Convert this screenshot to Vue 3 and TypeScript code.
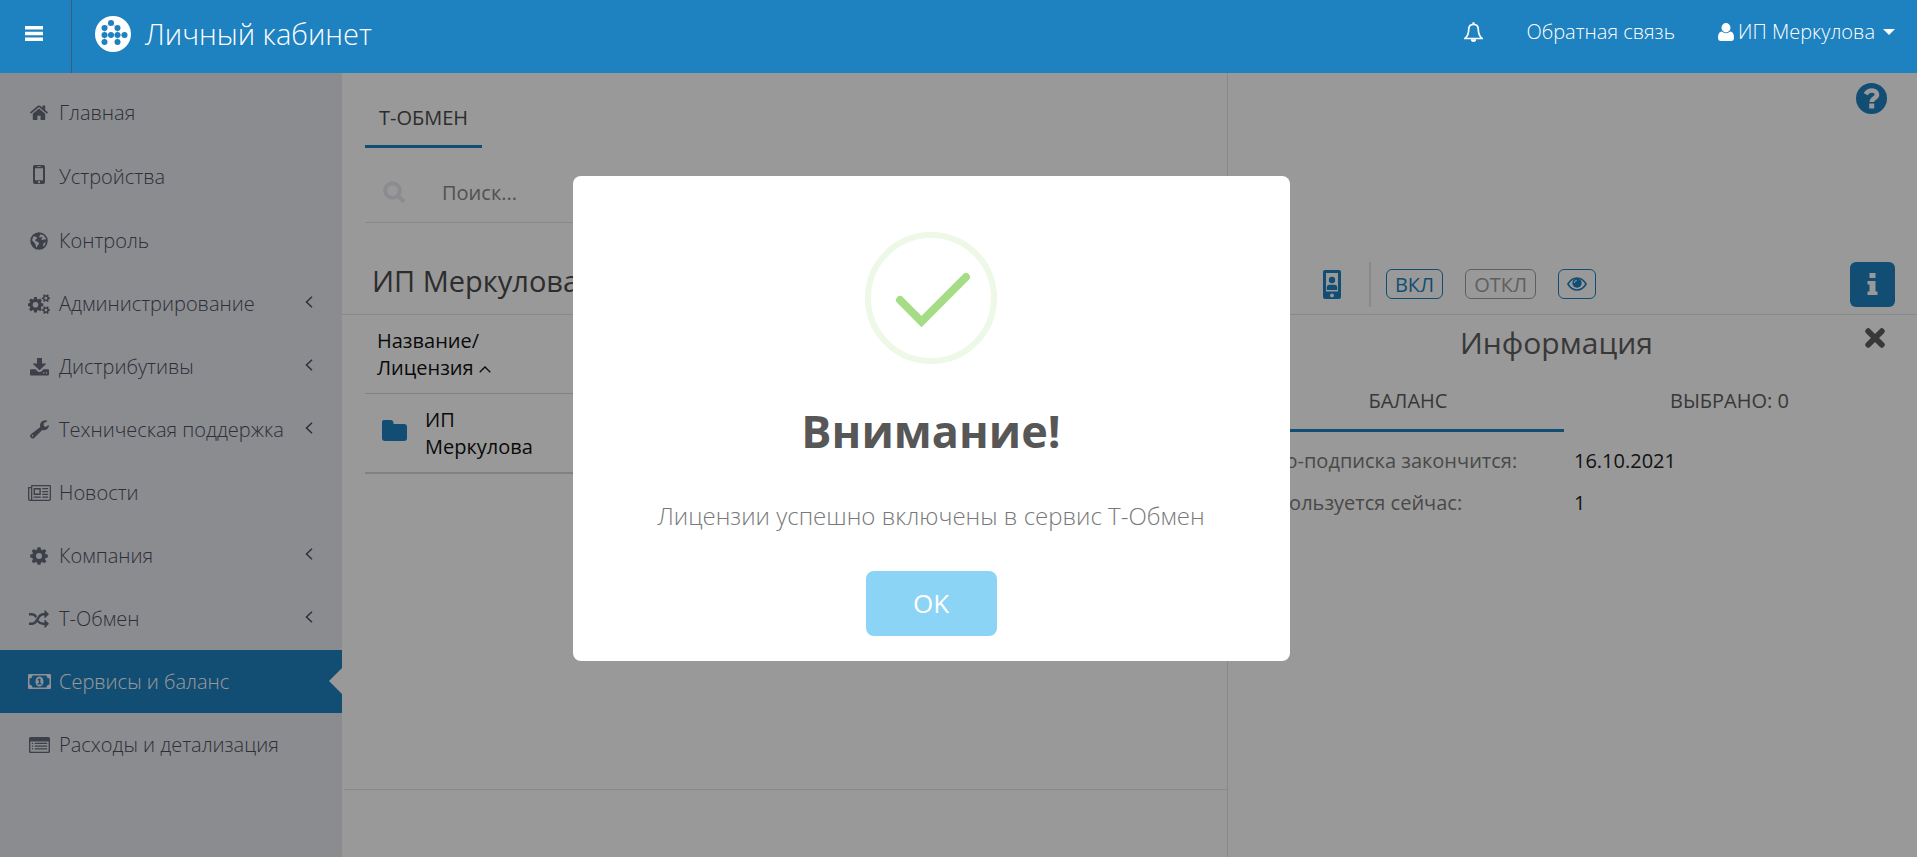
<script setup lang="ts">
import { ref } from 'vue'

interface Icon {
  box: string
  w: number
  h: number
  d: string
}

interface MenuItem {
  label: string
  icon: string
  arrow?: boolean
  active?: boolean
}

const icons: Record<string, Icon> = {
  home: {
    box: '0 0 18 15', w: 18, h: 15,
    d: 'M9 3.6 2.8 8.8V14.2q0 .7.7.7H7.4V10.8h3.2v4.1h3.9q.7 0 .7-.7V8.8ZM17.8 7.2 15.2 5V.8q0-.4-.4-.4h-1.9q-.4 0-.4.4v2L10.2.8Q9 0 7.8.8L.2 7.2q-.3.3 0 .5l.6.7q.2.2.5 0L9 2.1l7.7 6.3q.3.2.5 0l.6-.7q.3-.2 0-.5Z',
  },
  mobile: {
    box: '0 0 12 19', w: 12, h: 19,
    d: 'M1.8 0h8.4Q12 0 12 1.8v15.4q0 1.8-1.8 1.8H1.8Q0 19 0 17.2V1.8Q0 0 1.8 0ZM2 3.2v12h8v-12ZM4.2 1.2v.8h3.6v-.8ZM6 16.1a1.1 1.1 0 1 0 0 2.2 1.1 1.1 0 1 0 0-2.2Z',
  },
  globe: {
    box: '0 0 18 18', w: 18, h: 18,
    d: 'M9 .3a8.7 8.7 0 1 0 0 17.4A8.7 8.7 0 1 0 9 .3ZM10.5 2.2l3 1 2.6 3.4-.6 1.2-1.3-.6-1.4.8-1.5-.2.5-1.6 1-.8-1.3-.5-1.8.8-.6-1.1.9-1ZM3.2 4.8 5 4.3l1.7 1 .2 1.5-1.7 1 .3 1.3 1.6.5 2 1.4-.6 1.8-1.3 1.2-.2 1.6-1-.6-.7-3.3L3.6 10 2.1 8.2ZM14.8 10.2l1 .4-1.3 3-1.6 1 .2-2.4Z',
  },
  cogs: {
    box: '0 0 22 20', w: 22, h: 20,
    d: 'M6.2 3.1h2.6l.4 2 1.2.5 1.7-1.2 1.8 1.8-1.1 1.7.5 1.2 2 .4v2.6l-2 .4-.5 1.2 1.1 1.7-1.8 1.8-1.7-1.1-1.2.5-.4 2H6.2l-.4-2-1.2-.5-1.7 1.1-1.8-1.8 1.1-1.7-.5-1.2-1.7-.4V9.5l1.7-.4.5-1.2-1.1-1.7 1.8-1.8 1.7 1.2 1.2-.5ZM7.5 8a2.8 2.8 0 1 0 0 5.6 2.8 2.8 0 1 0 0-5.6ZM16.4.3l1 .9h1l1.1-.9 1.2.8-.4 1.3.5.8 1.3.3v1.4l-1.3.3-.5.8.4 1.4-1.2.7-1.1-1h-1l-1 1-1.2-.7.4-1.4-.5-.8-1.2-.3V3.5l1.2-.3.5-.8-.4-1.3ZM17.9 2.8a1.4 1.4 0 1 0 0 2.8 1.4 1.4 0 1 0 0-2.8ZM16.4 12.2l1 1h1l1.1-1 1.2.8-.4 1.3.5.8 1.3.3v1.4l-1.3.3-.5.8.4 1.4-1.2.7-1.1-1h-1l-1 1-1.2-.7.4-1.4-.5-.8-1.2-.3v-1.4l1.2-.3.5-.8-.4-1.3ZM17.9 14.7a1.4 1.4 0 1 0 0 2.8 1.4 1.4 0 1 0 0-2.8Z',
  },
  download: {
    box: '0 0 19 18', w: 19, h: 18,
    d: 'M7 0h5v5.5h3.6q.8 0 .2.7l-5.7 5.6q-.6.6-1.2 0L3.2 6.2q-.6-.7.2-.7H7ZM1 11.2h4.5l2 2q2 1.8 4 0l2-2H18q1 0 1 1v4.2q0 1-1 1H1q-1 0-1-1v-4.2q0-1 1-1ZM13 14.2v1.3h1.3v-1.3ZM15.8 14.2v1.3h1.3v-1.3Z',
  },
  wrench: {
    box: '0 0 19 19', w: 19, h: 19,
    d: 'M10.3 7.1A5.2 5.2 0 0 1 16.8.5q.9.2.3.7L13.7 3.2V5.8L15.5 6.9 18.3 5.2q.8-.3.7.6A5.3 5.3 0 0 1 12.2 9.9L4.2 18q-1.4 1.2-2.8 0L.6 17.2q-1.1-1.4 0-2.7ZM2.6 14.9a.8.8 0 1 0 0 1.6.8.8 0 1 0 0-1.6Z',
  },
  news: {
    box: '0 0 23 16', w: 23, h: 16,
    d: 'M4 0h18q1 0 1 1v13q0 2-2 2H2q-2 0-2-2V2h3V1q0-1 1-1ZM4.3 1.3V14q0 .4-.2.7H21q.7 0 .7-.7V1.3ZM1.3 3.3V14q0 .7.8.7T3 14V3.3ZM5.6 3h7.2v7H5.6ZM7 4.4v4.2h4.4V4.4ZM14.3 3h5.9v1.3h-5.9ZM14.3 5.9h5.9v1.3h-5.9ZM14.3 8.7h5.9V10h-5.9ZM5.6 11.5h7.2v1.3H5.6ZM14.3 11.5h5.9v1.3h-5.9Z',
  },
  cog: {
    box: '0 0 18 18', w: 18, h: 18,
    d: 'M7.5.3h3l.5 2.3 1.3.6 2-1.3 2 2-1.3 2 .6 1.3 2.2.4v2.9l-2.2.5-.6 1.3 1.3 2-2 2-2-1.3-1.3.6-.5 2.2h-3L7 15.6 5.7 15l-2 1.3-2-2 1.3-2-.6-1.3-2.2-.5V7.6l2.2-.4L3 5.9l-1.3-2 2-2 2 1.3L7 2.6ZM9 6a3 3 0 1 0 0 6 3 3 0 1 0 0-6Z',
  },
  shuffle: {
    box: '0 0 20 18', w: 20, h: 18,
    d: 'M0 3h3.2Q6 3 8 6L6.8 8.2Q5 5.6 3.2 5.6H0ZM0 12.4h3.2c4.4 0 4.8-9.4 10.8-9.4h1.5V.5q.1-.7.7-.2L20 4.2 16.2 8.1q-.6.5-.7-.2V5.6H14c-4.3 0-4.6 9.4-10.8 9.4H0ZM9.4 9.9q2 2.5 4.6 2.5h1.5v-2.3q.1-.7.7-.2l3.8 3.9-3.8 3.9q-.6.5-.7-.2V15H14q-3.5 0-5.9-2.9Z',
  },
  money: {
    box: '0 0 23 15', w: 23, h: 15,
    d: 'M1 0h21q1 0 1 1v13q0 1-1 1H1q-1 0-1-1V1Q0 0 1 0ZM4.6 1.5Q4.3 4.3 1.5 4.6V10.4Q4.3 10.7 4.6 13.5H18.4Q18.7 10.7 21.5 10.4V4.6Q18.7 4.3 18.4 1.5ZM11.5 2.5c5.3 0 5.3 10 0 10s-5.3-10 0-10ZM11 4.5 9.4 5.8l.7.9.8-.5V9.2H9.6v1.2h4V9.2h-1.2V4.5Z',
  },
  list: {
    box: '0 0 21 16', w: 21, h: 16,
    d: 'M1.5 0h18Q21 0 21 1.5v13q0 1.5-1.5 1.5h-18Q0 16 0 14.5v-13Q0 0 1.5 0ZM1.4 4.4v9.7q0 .6.6.6h17q.6 0 .6-.6V4.4ZM2.9 5.7h1.3V7H2.9ZM5.7 5.7h12.5V7H5.7ZM2.9 8.5h1.3v1.3H2.9ZM5.7 8.5h12.5v1.3H5.7ZM2.9 11.3h1.3v1.3H2.9ZM5.7 11.3h12.5v1.3H5.7Z',
  },
}

const menu: MenuItem[] = [
  { label: 'Главная', icon: 'home' },
  { label: 'Устройства', icon: 'mobile' },
  { label: 'Контроль', icon: 'globe' },
  { label: 'Администрирование', icon: 'cogs', arrow: true },
  { label: 'Дистрибутивы', icon: 'download', arrow: true },
  { label: 'Техническая поддержка', icon: 'wrench', arrow: true },
  { label: 'Новости', icon: 'news' },
  { label: 'Компания', icon: 'cog', arrow: true },
  { label: 'Т-Обмен', icon: 'shuffle', arrow: true },
  { label: 'Сервисы и баланс', icon: 'money', active: true },
  { label: 'Расходы и детализация', icon: 'list' },
]

const logoDots: [number, number][] = [
  [16, 7], [9.5, 12], [22.5, 12], [9.5, 19], [16, 19], [22.5, 19], [29.5, 19], [9.5, 26], [22.5, 26],
]

const search = ref('')
const open = ref(true)
</script>

<template>
  <div class="page">
    <header class="topbar">
      <button class="burger" type="button" aria-label="Меню">
        <svg width="18" height="15" viewBox="0 0 18 15"><path fill="currentColor" d="M0 0h18v3.400H0ZM0 5.800h18v3.400H0ZM0 11.600h18V15H0Z" /></svg>
      </button>
      <a class="brand" href="#">
        <svg width="36" height="36" viewBox="0 0 36 36">
          <circle cx="18" cy="18" r="18" fill="#fff" />
          <circle v-for="(p, i) in logoDots" :key="i" :cx="p[0]" :cy="p[1]" r="3" fill="#1e81c0" />
          <path d="M9.500 19h20M16 7l-6.500 5M16 7l6.500 5M9.500 12v14M22.500 12v14" fill="none" stroke="#1e81c0" stroke-width="1" opacity=".4" />
        </svg>
        <span>Личный кабинет</span>
      </a>
      <nav class="topnav">
        <a class="bell" href="#" aria-label="Уведомления">
          <svg width="19" height="20" viewBox="0 0 19 20">
            <path fill="none" stroke="currentColor" stroke-width="1.700" d="M9.500 2.300C6 2.300 4.700 5 4.700 7.500c0 5-1.500 7-3.700 9h17c-2.200-2-3.700-4-3.700-9 0-2.500-1.300-5.200-4.800-5.200Z" />
            <path fill="currentColor" d="M6.800 17.200h5.400a2.700 2.700 0 0 1-5.400 0ZM8.500.3h2v2.200h-2Z" />
          </svg>
        </a>
        <a class="feedback" href="#">Обратная связь</a>
        <button class="user" type="button">
          <svg width="16" height="18" viewBox="0 0 16 18"><path fill="currentColor" d="M8 0a4.500 4.700 0 1 1 0 9.400A4.500 4.700 0 1 1 8 0ZM3.800 8.500Q8 12 12.200 8.500 16 9 16 14.500q0 3.500-3 3.500H3q-3 0-3-3.500Q0 9 3.800 8.500Z" /></svg>
          <span>ИП Меркулова</span>
          <svg class="caret" width="12" height="6" viewBox="0 0 12 6"><path fill="currentColor" d="M0 0h12L6 6Z" /></svg>
        </button>
      </nav>
    </header>

    <div class="body">
      <aside class="sidebar">
        <ul class="menu">
          <li v-for="item in menu" :key="item.label" :class="{ active: item.active, tall: item.icon === 'mobile' }">
            <a href="#">
              <span class="micon">
                <svg :width="icons[item.icon].w" :height="icons[item.icon].h" :viewBox="icons[item.icon].box">
                  <path fill="currentColor" fill-rule="evenodd" :d="icons[item.icon].d" />
                </svg>
              </span>
              <span class="mlabel">{{ item.label }}</span>
              <svg v-if="item.arrow" class="arrow" width="8" height="12" viewBox="0 0 8 12"><path fill="none" stroke="currentColor" stroke-width="1.500" d="M7 .8 1.500 6 7 11.200" /></svg>
            </a>
          </li>
        </ul>
      </aside>

      <main class="content">
        <div class="upper">
          <section class="left-col left-top">
            <div class="tabs"><button class="tab" type="button">Т-ОБМЕН</button></div>
            <label class="search">
              <svg width="23" height="22" viewBox="0 0 23 22"><circle cx="9.500" cy="9.500" r="7.300" fill="none" stroke="currentColor" stroke-width="4" /><path d="m15 15 5 4.700" stroke="currentColor" stroke-width="4" stroke-linecap="round" /></svg>
              <input v-model="search" type="text" placeholder="Поиск..." aria-label="Поиск" />
            </label>
          </section>
          <section class="right-col">
            <a class="help" href="#" aria-label="Помощь">
              <svg width="31" height="31" viewBox="0 0 31 31">
                <circle cx="15.500" cy="15.500" r="15.500" fill="#1e81c0" />
                <path fill="none" stroke="#fff" stroke-width="4.600" d="M9.800 11.200C11.500 7.800 14 7.500 16 7.500c3 0 5 1.800 5 4.200 0 3.500-5.200 3.300-5.200 7.200" />
                <path fill="#fff" d="M13.200 20.500h5v5h-5Z" />
              </svg>
            </a>
          </section>
        </div>

        <div class="toolbar">
          <h1 class="left-col org">ИП Меркулова</h1>
          <div class="right-col actions">
            <button class="device" type="button" aria-label="Устройство">
              <svg width="18" height="29" viewBox="0 0 18 29">
                <path fill="currentColor" fill-rule="evenodd" d="M2 0h14q2 0 2 2v25q0 2-2 2H2q-2 0-2-2V2Q0 0 2 0ZM3 3v18.500h12V3ZM9 23.500a1.900 1.900 0 1 0 0 3.800 1.900 1.900 0 1 0 0-3.800Z" />
                <circle cx="9" cy="10" r="3.200" fill="currentColor" />
                <path fill="currentColor" d="M3.800 20v-2.600q0-2.600 2.600-2.600h5.200q2.600 0 2.600 2.600V20Z" />
              </svg>
            </button>
            <span class="divider"></span>
            <button class="pill" type="button">ВКЛ</button>
            <button class="pill off" type="button">ОТКЛ</button>
            <button class="pill" type="button" aria-label="Просмотр">
              <svg width="20" height="14" viewBox="0 0 20 14"><path fill="none" stroke="currentColor" stroke-width="1.500" d="M.9 7Q4.500.9 10 .9T19.100 7Q15.500 13.100 10 13.100T.9 7Z" /><circle cx="10" cy="6" r="4.700" fill="currentColor" /><path fill="none" stroke="#fff" stroke-width="1" d="M7.300 6Q7.300 3.500 9.800 3.300" /></svg>
            </button>
            <button class="info" type="button" aria-label="Информация">
              <svg width="11" height="22" viewBox="0 0 11 22"><path fill="currentColor" d="M2.500 0h6v5h-6ZM.5 8H8.500v10.500H10.500V22H.5V18.500H2.500V11.500H.5Z" /></svg>
            </button>
          </div>
        </div>

        <div class="lower">
          <section class="left-col left-bottom">
            <table class="grid">
              <colgroup><col class="c-name" /><col /></colgroup>
              <thead>
                <tr>
                  <th scope="col">Название/<br />Лицензия <svg class="sort" width="12" height="7" viewBox="0 0 12 7"><path fill="none" stroke="currentColor" stroke-width="1.300" d="M.7 6.300 6 1l5.300 5.300" /></svg></th>
                  <td></td>
                </tr>
              </thead>
              <tbody>
                <tr>
                  <td>
                    <div class="org-cell">
                      <svg width="25" height="21" viewBox="0 0 25 21"><path fill="#1e81c0" d="M2 0h7q2 0 2.500 2.500V4H22q3 0 3 3v11q0 3-3 3H3q-3 0-3-3V2Q0 0 2 0Z" /></svg>
                      <span>ИП Меркулова</span>
                    </div>
                  </td>
                  <td></td>
                </tr>
              </tbody>
            </table>
            <div class="pager"></div>
          </section>
          <aside class="right-col">
            <div class="panel-head">
              <h2>Информация</h2>
              <button type="button" aria-label="Закрыть">
                <svg width="20" height="20" viewBox="0 0 20 20"><path d="m3.200 3.200 13.600 13.600M16.800 3.200 3.200 16.800" stroke="currentColor" stroke-width="5.800" stroke-linecap="round" /></svg>
              </button>
            </div>
            <div class="panel-tabs">
              <button class="current" type="button">БАЛАНС</button>
              <button type="button">ВЫБРАНО: 0</button>
            </div>
            <dl class="facts">
              <dt>Авто-подписка закончится:</dt>
              <dd>16.10.2021</dd>
              <dt>Используется сейчас:</dt>
              <dd>1</dd>
            </dl>
          </aside>
        </div>
      </main>
    </div>

    <div v-if="open" class="overlay"></div>
    <div v-if="open" class="modal" role="dialog" aria-modal="true" aria-labelledby="dlg-title">
      <svg width="132" height="132" viewBox="0 0 132 132">
        <circle cx="66" cy="66" r="63" fill="none" stroke="#edf8e7" stroke-width="6" />
        <path fill="none" stroke="#a5dc86" stroke-width="8" stroke-linecap="round" d="M35 68 56.500 89.500 101 45" />
      </svg>
      <h2 id="dlg-title">Внимание!</h2>
      <p>Лицензии успешно включены в сервис Т-Обмен</p>
      <button type="button" @click="open = false">OK</button>
    </div>
  </div>
</template>

<style>
body {
  margin: 0;
}
</style>

<style scoped>
.page {
  --blue: #1e81c0;
  --line: #e4e4e4;
  display: flex;
  flex-direction: column;
  min-height: 100vh;
  font-family: 'Open Sans', 'Noto Sans', sans-serif;
  font-size: 20px;
  line-height: 27px;
  color: #222;
  background: #fff;
}
.page * {
  box-sizing: border-box;
}
button {
  padding: 0;
  border: 0;
  background: none;
  font: inherit;
  color: inherit;
  cursor: pointer;
}
a {
  color: inherit;
  text-decoration: none;
}
svg {
  flex: none;
}
.topbar {
  position: relative;
  z-index: 2;
  display: flex;
  height: 73px;
  color: #fff;
  background: var(--blue);
  font-weight: 300;
}
.burger {
  display: flex;
  align-items: center;
  justify-content: center;
  width: 72px;
  padding: 0 4px 6px 0;
  border-right: 1px solid #3a5f7d;
}
.brand {
  display: flex;
  align-items: center;
  gap: 14px;
  padding: 0 0 6px 23px;
  font-size: 29px;
}
.topnav {
  display: flex;
  align-items: center;
  margin-left: auto;
  padding: 0 22px 10px 0;
}
.bell {
  display: flex;
  margin-right: 43px;
}
.feedback {
  margin-right: 43px;
}
.user {
  display: flex;
  align-items: center;
  gap: 4px;
}
.caret {
  margin-left: 4px;
}
.body {
  display: flex;
  flex: 1;
}
.sidebar {
  flex: none;
  width: 342px;
  padding-top: 8px;
  background: #e8e9ee;
  font-weight: 300;
  color: #4b4f60;
}
.menu {
  margin: 0;
  padding: 0;
  list-style: none;
}
.menu a {
  display: flex;
  align-items: center;
  height: 63px;
  padding: 0 29px 0 27px;
}
.menu .tall a {
  height: 65px;
}
.tall svg {
  margin-bottom: 4px;
}
.micon {
  display: flex;
  justify-content: center;
  width: 24px;
  margin-right: 8px;
  color: #666a7a;
}
.mlabel {
  flex: 1;
}
.arrow {
  margin-bottom: 4px;
}
.menu .active {
  position: relative;
  background: var(--blue);
  color: #fff;
}
.active .micon {
  color: #f0f0fa;
}
.menu .active::after {
  content: '';
  position: absolute;
  right: 0;
  top: 18px;
  border: 13px solid transparent;
  border-right-color: #fff;
  border-left-width: 0;
}
.content {
  display: flex;
  flex: 1;
  flex-direction: column;
  min-width: 0;
}
.upper,
.toolbar,
.lower {
  display: flex;
}
.left-col {
  flex: 1;
  min-width: 0;
  border-right: 1px solid var(--line);
}
.right-col {
  flex: none;
  width: 43.75%;
}
.upper {
  height: 180px;
}
.left-top {
  padding-left: 23px;
}
.tabs {
  display: flex;
}
.tab {
  width: 117px;
  height: 75px;
  padding-top: 16px;
  border-bottom: 3px solid var(--blue);
  color: #4b4b4b;
}
.search {
  display: flex;
  align-items: center;
  height: 75px;
  padding: 14px 0 0 18px;
  border-bottom: 1px solid var(--line);
  color: #e8e9ee;
}
.search input {
  flex: 1;
  margin-left: 36px;
  padding: 0;
  border: 0;
  outline: 0;
  font: inherit;
  color: #555;
  background: none;
}
.search input::placeholder {
  color: #888;
  opacity: 1;
}
.help {
  display: flex;
  justify-content: flex-end;
  padding: 10px 30px 0 0;
}
.toolbar {
  height: 62px;
  border-bottom: 1px solid var(--line);
}
.org {
  margin: 0;
  padding: 8px 0 0 30px;
  font-size: 29px;
  line-height: 40px;
  font-weight: 400;
  color: #4b4b4b;
}
.actions {
  display: flex;
  align-items: center;
  padding: 1px 22px 0 95px;
  color: var(--blue);
}
.device {
  display: flex;
}
.divider {
  width: 2px;
  height: 45px;
  margin: 0 15px 0 28px;
  background: var(--line);
}
.pill {
  display: flex;
  align-items: center;
  height: 30px;
  margin-right: 22px;
  padding: 0 8px;
  border: 1px solid currentColor;
  border-radius: 6px;
}
.pill.off {
  color: #a0a0a0;
}
.info {
  display: flex;
  align-items: center;
  justify-content: center;
  width: 45px;
  height: 45px;
  margin-left: auto;
  border-radius: 6px;
  color: #fff;
  background: var(--blue);
}
.lower {
  flex: 1;
}
.left-bottom {
  display: flex;
  flex-direction: column;
}
.grid {
  margin-left: 23px;
  border-collapse: collapse;
  table-layout: fixed;
  color: #111;
}
.c-name {
  width: 190px;
}
.grid th,
.grid td {
  height: 78px;
  padding: 0 12px;
  text-align: left;
  font-weight: inherit;
  border-bottom: 1px solid #d8d8d8;
}
.grid tbody td {
  height: 80px;
  border-bottom-width: 2px;
}
.sort {
  vertical-align: 2px;
}
.org-cell {
  display: flex;
  align-items: center;
  gap: 18px;
  padding-left: 5px;
}
.org-cell svg {
  margin-bottom: 4px;
}
.pager {
  height: 68px;
  margin-top: auto;
  margin-left: 2px;
  border-top: 1px solid var(--line);
}
.panel-head {
  display: flex;
  align-items: center;
  height: 60px;
  padding-right: 32px;
  color: #5e5e5e;
}
.panel-head h2 {
  flex: 1;
  margin: 0;
  padding: 0 0 4px 20px;
  font-size: 30px;
  line-height: 40px;
  font-weight: 400;
  text-align: center;
}
.panel-head button {
  display: flex;
  margin-bottom: 14px;
}
.panel-tabs {
  display: grid;
  grid-template-columns: 312fr 331fr;
  padding: 0 22px 0 24px;
}
.panel-tabs button {
  height: 57px;
  padding-bottom: 4px;
  border-bottom: 3px solid transparent;
  color: #5e5e5e;
}
.panel-tabs .current {
  border-color: var(--blue);
}
.facts {
  display: grid;
  grid-template-columns: 322fr 321fr;
  margin: 0;
  padding: 8px 22px 0 24px;
  line-height: 42px;
}
.facts dt {
  color: #7b7b7b;
}
.facts dd {
  margin: 0;
}
.overlay {
  position: fixed;
  inset: 0;
  z-index: 1;
  background: rgba(0, 0, 0, 0.4);
}
.modal {
  position: fixed;
  z-index: 3;
  top: calc(50% - 253px);
  left: calc(50% - 386px);
  display: flex;
  flex-direction: column;
  align-items: center;
  width: 717px;
  padding: 56px 24px 25px;
  border-radius: 8px;
  background: #fff;
}
.modal h2 {
  margin: 37px 0 38px;
  font-size: 45px;
  line-height: 60px;
  font-weight: 700;
  color: #575757;
}
.modal p {
  margin: 0 0 38px;
  font-size: 24px;
  line-height: 34px;
  font-weight: 300;
  color: #797979;
}
.modal button {
  width: 131px;
  height: 65px;
  border-radius: 8px;
  font-size: 26px;
  color: #fff;
  background: #8cd4f5;
}
</style>
